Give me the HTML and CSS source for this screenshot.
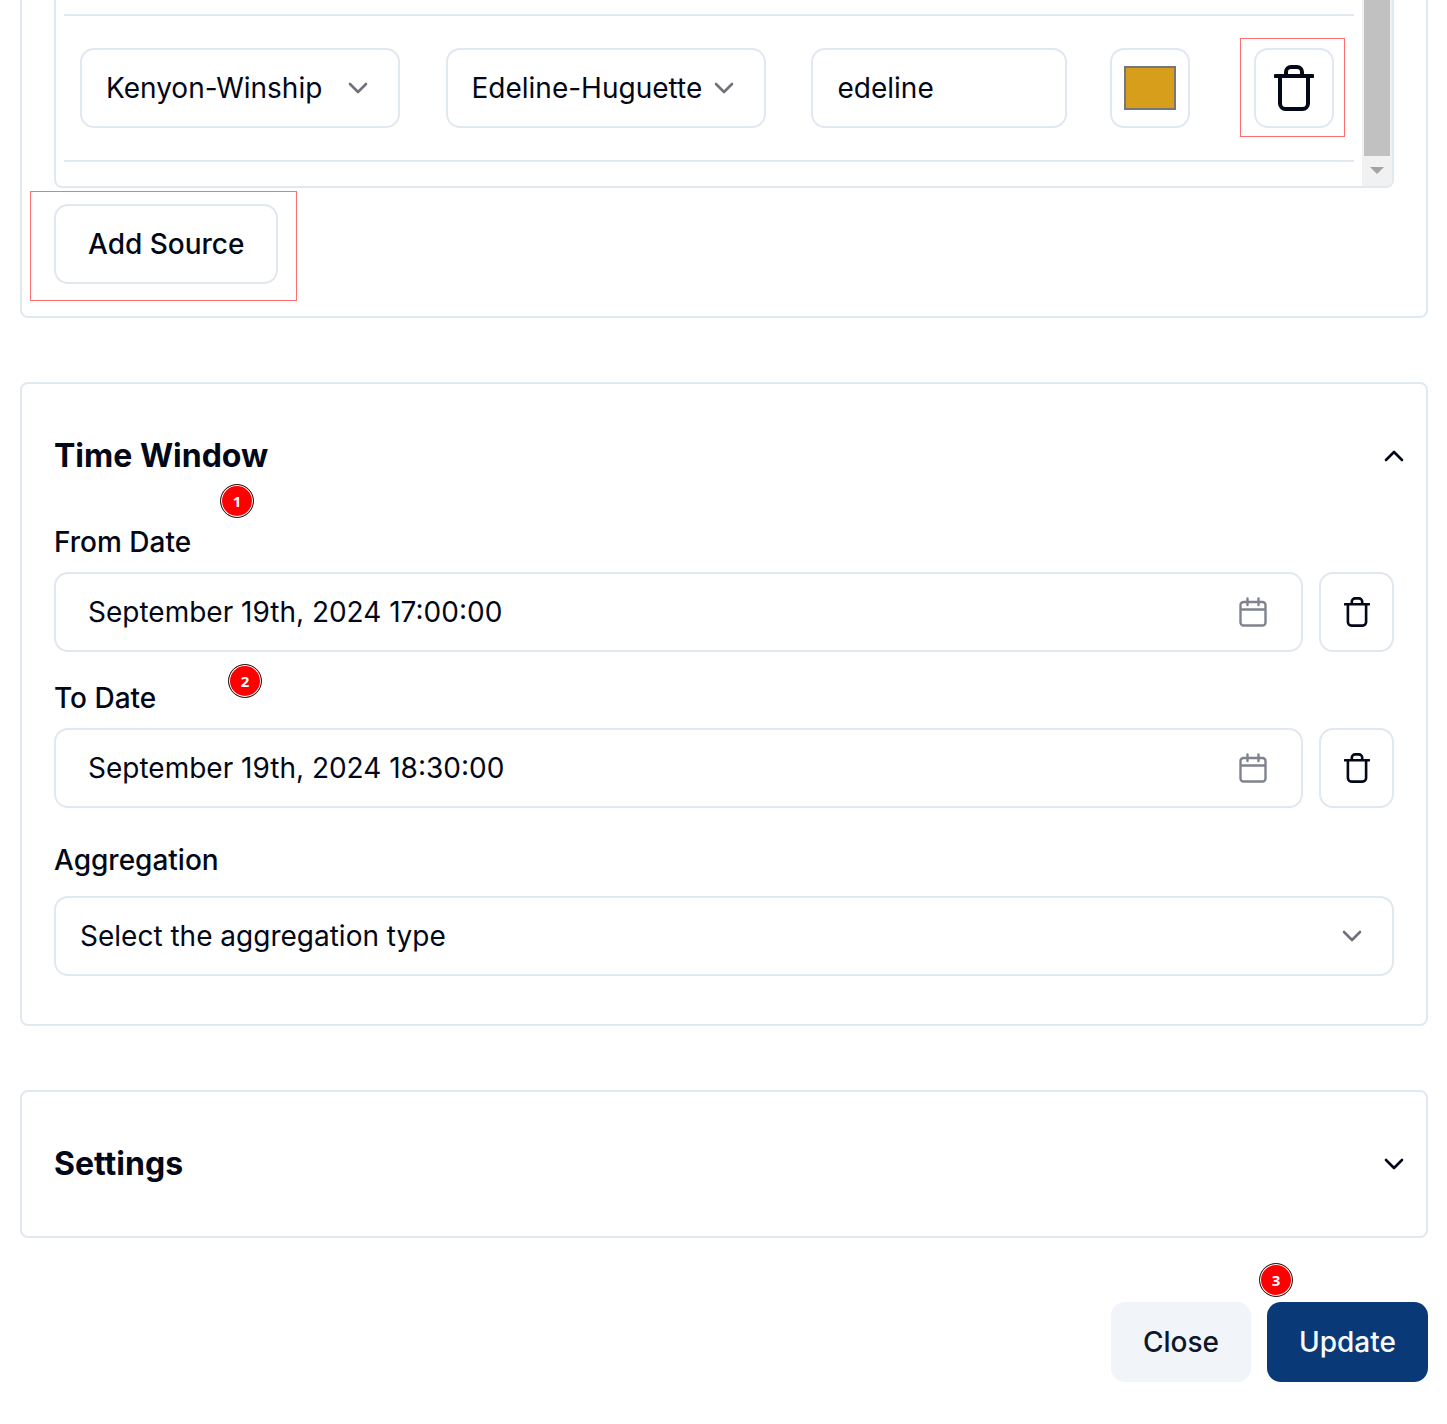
FILE: index.html
```html
<!DOCTYPE html>
<html lang="en">
<head>
<meta charset="utf-8">
<title>Edit chart</title>
<link rel="stylesheet" href="styles.css">
</head>
<body>
<svg class="defs" width="0" height="0" aria-hidden="true">
  <symbol id="trash" viewBox="0 0 40 46">
    <path d="M1.5 11H38.5M12 11V7A5 5 0 0 1 17 2H23A5 5 0 0 1 28 7V11M6 11V38.5A5.5 5.5 0 0 0 11.5 44H28.5A5.5 5.5 0 0 0 34 38.5V11" fill="none" stroke="currentColor" stroke-width="4" stroke-linecap="round" stroke-linejoin="round"/>
  </symbol>
  <symbol id="calendar" viewBox="0 0 28 30">
    <path d="M4.5 5H23.5A3 3 0 0 1 26.5 8V25.5A3 3 0 0 1 23.5 28.5H4.5A3 3 0 0 1 1.5 25.5V8A3 3 0 0 1 4.5 5ZM1.5 12.5H26.5M8.5 1.5V8M19.5 1.5V8" fill="none" stroke="currentColor" stroke-width="2.4" stroke-linecap="round" stroke-linejoin="round"/>
  </symbol>
  <symbol id="chevron" viewBox="0 0 20 12">
    <path d="M2 2L10 10L18 2" fill="none" stroke="currentColor" stroke-width="2.6" stroke-linecap="round" stroke-linejoin="round"/>
  </symbol>
</svg>

<main class="page">
  <section class="card card-sources">
    <div class="sources-box">
      <div class="sources-list">
        <div class="source-row">
          <div class="field select source-a"><span>Kenyon-Winship</span><svg class="chev"><use href="#chevron"/></svg></div>
          <div class="field select source-b"><span>Edeline-Huguette</span><svg class="chev"><use href="#chevron"/></svg></div>
          <div class="field source-c">edeline</div>
          <div class="field swatch-btn"><div class="swatch"></div></div>
          <button class="field icon-btn source-del" type="button"><svg class="trash-lg"><use href="#trash"/></svg></button>
        </div>
      </div>
      <div class="scrollbar">
        <div class="thumb"></div>
        <div class="arrow-slot"><div class="arrow"></div></div>
      </div>
    </div>
    <button class="field add-source" type="button">Add Source</button>
  </section>

  <section class="card">
    <header class="card-head">
      <h2>Time Window</h2>
      <svg class="head-chev up"><use href="#chevron"/></svg>
    </header>
    <label class="label">From Date</label>
    <div class="date-row">
      <div class="field date-input"><span>September 19th, 2024 17:00:00</span><svg class="cal"><use href="#calendar"/></svg></div>
      <button class="field icon-btn date-del" type="button"><svg class="trash-sm"><use href="#trash"/></svg></button>
    </div>
    <label class="label label-next">To Date</label>
    <div class="date-row">
      <div class="field date-input"><span>September 19th, 2024 18:30:00</span><svg class="cal"><use href="#calendar"/></svg></div>
      <button class="field icon-btn date-del" type="button"><svg class="trash-sm"><use href="#trash"/></svg></button>
    </div>
    <label class="label label-agg">Aggregation</label>
    <div class="field select agg"><span>Select the aggregation type</span><svg class="chev"><use href="#chevron"/></svg></div>
  </section>

  <section class="card card-settings">
    <header class="card-head">
      <h2>Settings</h2>
      <svg class="head-chev"><use href="#chevron"/></svg>
    </header>
  </section>

  <footer class="actions">
    <button class="btn btn-close" type="button">Close</button>
    <button class="btn btn-update" type="button">Update</button>
  </footer>

  <div class="mark mark-del"></div>
  <div class="mark mark-add"></div>
  <div class="badge badge-1">1</div>
  <div class="badge badge-2">2</div>
  <div class="badge badge-3">3</div>
</main>
</body>
</html>
```
FILE: styles.css
```css
* { box-sizing: border-box; }
html, body { margin: 0; padding: 0; background: #fff; }
body { font-family: Inter, "Liberation Sans", sans-serif; font-size: 28px; color: #020817; overflow: hidden; }
.defs { position: absolute; }
.page { position: relative; width: 1447px; height: 1424px; padding: 0 19px 0 20px; }
button { font: inherit; color: inherit; background: #fff; margin: 0; }

.card { border: 2px solid #e2e8f0; border-radius: 8px; padding: 32px 32px 48px; margin-bottom: 64px; }
.card-sources { border-top: 0; border-radius: 0 0 8px 8px; padding: 0 32px 32px; }
.card-settings { padding-bottom: 32px; }

.field { height: 80px; border: 2px solid #e2e8f0; border-radius: 14px; background: #fff; display: flex; align-items: center; }

.sources-box { height: 188px; border: 2px solid #e2e8f0; border-top: 0; border-radius: 0 0 8px 8px; display: flex; justify-content: space-between; padding-left: 8px; }
.sources-list { width: 1290px; padding-top: 14px; }
.source-row { border-top: 2px solid #e2e8f0; border-bottom: 2px solid #e2e8f0; height: 148px; padding: 32px 0 0 16px; display: flex; }
.scrollbar { width: 30px; background: #f1f1f1; display: flex; flex-direction: column; align-items: center; border-radius: 0 0 6px 0; }
.thumb { width: 26px; height: 156px; background: #c1c1c1; }
.arrow-slot { flex: 1; display: flex; align-items: center; justify-content: center; padding-bottom: 2px; }
.arrow { width: 0; height: 0; border-left: 7px solid transparent; border-right: 7px solid transparent; border-top: 7px solid #a3a3a3; }

.select { justify-content: space-between; }
.source-a { width: 320px; padding: 0 30px 0 24px; }
.source-b { width: 320px; margin-left: 46px; padding: 0 30px 0 23.5px; }
.source-c { width: 256px; margin-left: 45px; padding: 0 24.5px; }
.swatch-btn { width: 80px; margin-left: 43px; justify-content: center; }
.swatch { width: 52px; height: 44px; background: #d79e1b; border: 2px solid #767676; }
.icon-btn { justify-content: center; padding: 0; }
.source-del { width: 80px; margin-left: 64px; }
.trash-lg { width: 40px; height: 46px; }
.trash-sm { width: 26px; height: 30px; }
.chev { width: 20px; height: 12px; color: #71717a; }
.head-chev { width: 20px; height: 12px; color: #020817; margin-right: -10px; }
.head-chev.up { transform: rotate(180deg); }

.add-source { width: 224px; margin-top: 16px; padding: 0 0 0 32px; font-weight: 500; }

.card-head { height: 80px; display: flex; align-items: center; justify-content: space-between; }
.card-head h2 { margin: 0 0 2px; font-size: 32px; font-weight: 700; }
.card-head + .label { margin-top: 26px; }
.label { display: block; line-height: 40px; margin-bottom: 10px; font-weight: 500; }
.label-next { margin-top: 26px; }
.label-agg { margin-top: 32px; margin-bottom: 16px; }
.date-row { display: flex; gap: 16px; }
.date-input { flex: 1; padding: 0 34px 0 32px; justify-content: space-between; }
.date-del { width: 75px; }
.cal { width: 28px; height: 30px; color: #80838d; }
.agg { padding: 0 30px 0 24px; }

.actions { display: flex; justify-content: flex-end; gap: 16px; }
.btn { height: 80px; border: 0; border-radius: 14px; padding: 0; font-weight: 500; }
.btn-close { width: 140px; background: #f1f5f9; color: #0f172a; }
.btn-update { width: 161px; background: #0a3977; color: #f8fafc; }

.mark { position: absolute; border: 1px solid #ff7070; pointer-events: none; }
.mark-del { left: 1240px; top: 38px; width: 105px; height: 99px; }
.mark-add { left: 30px; top: 191px; width: 267px; height: 110px; }

.badge { position: absolute; width: 34px; height: 34px; border-radius: 50%; background: #ff0000; border: 1px solid #222; box-shadow: inset 0 0 0 1px #fff; color: #fff; font-family: "Open Sans", sans-serif; font-size: 15px; font-weight: 700; display: flex; align-items: center; justify-content: center; }
.badge-1 { left: 220px; top: 484px; }
.badge-2 { left: 228px; top: 664px; }
.badge-3 { left: 1259px; top: 1263px; }
```
